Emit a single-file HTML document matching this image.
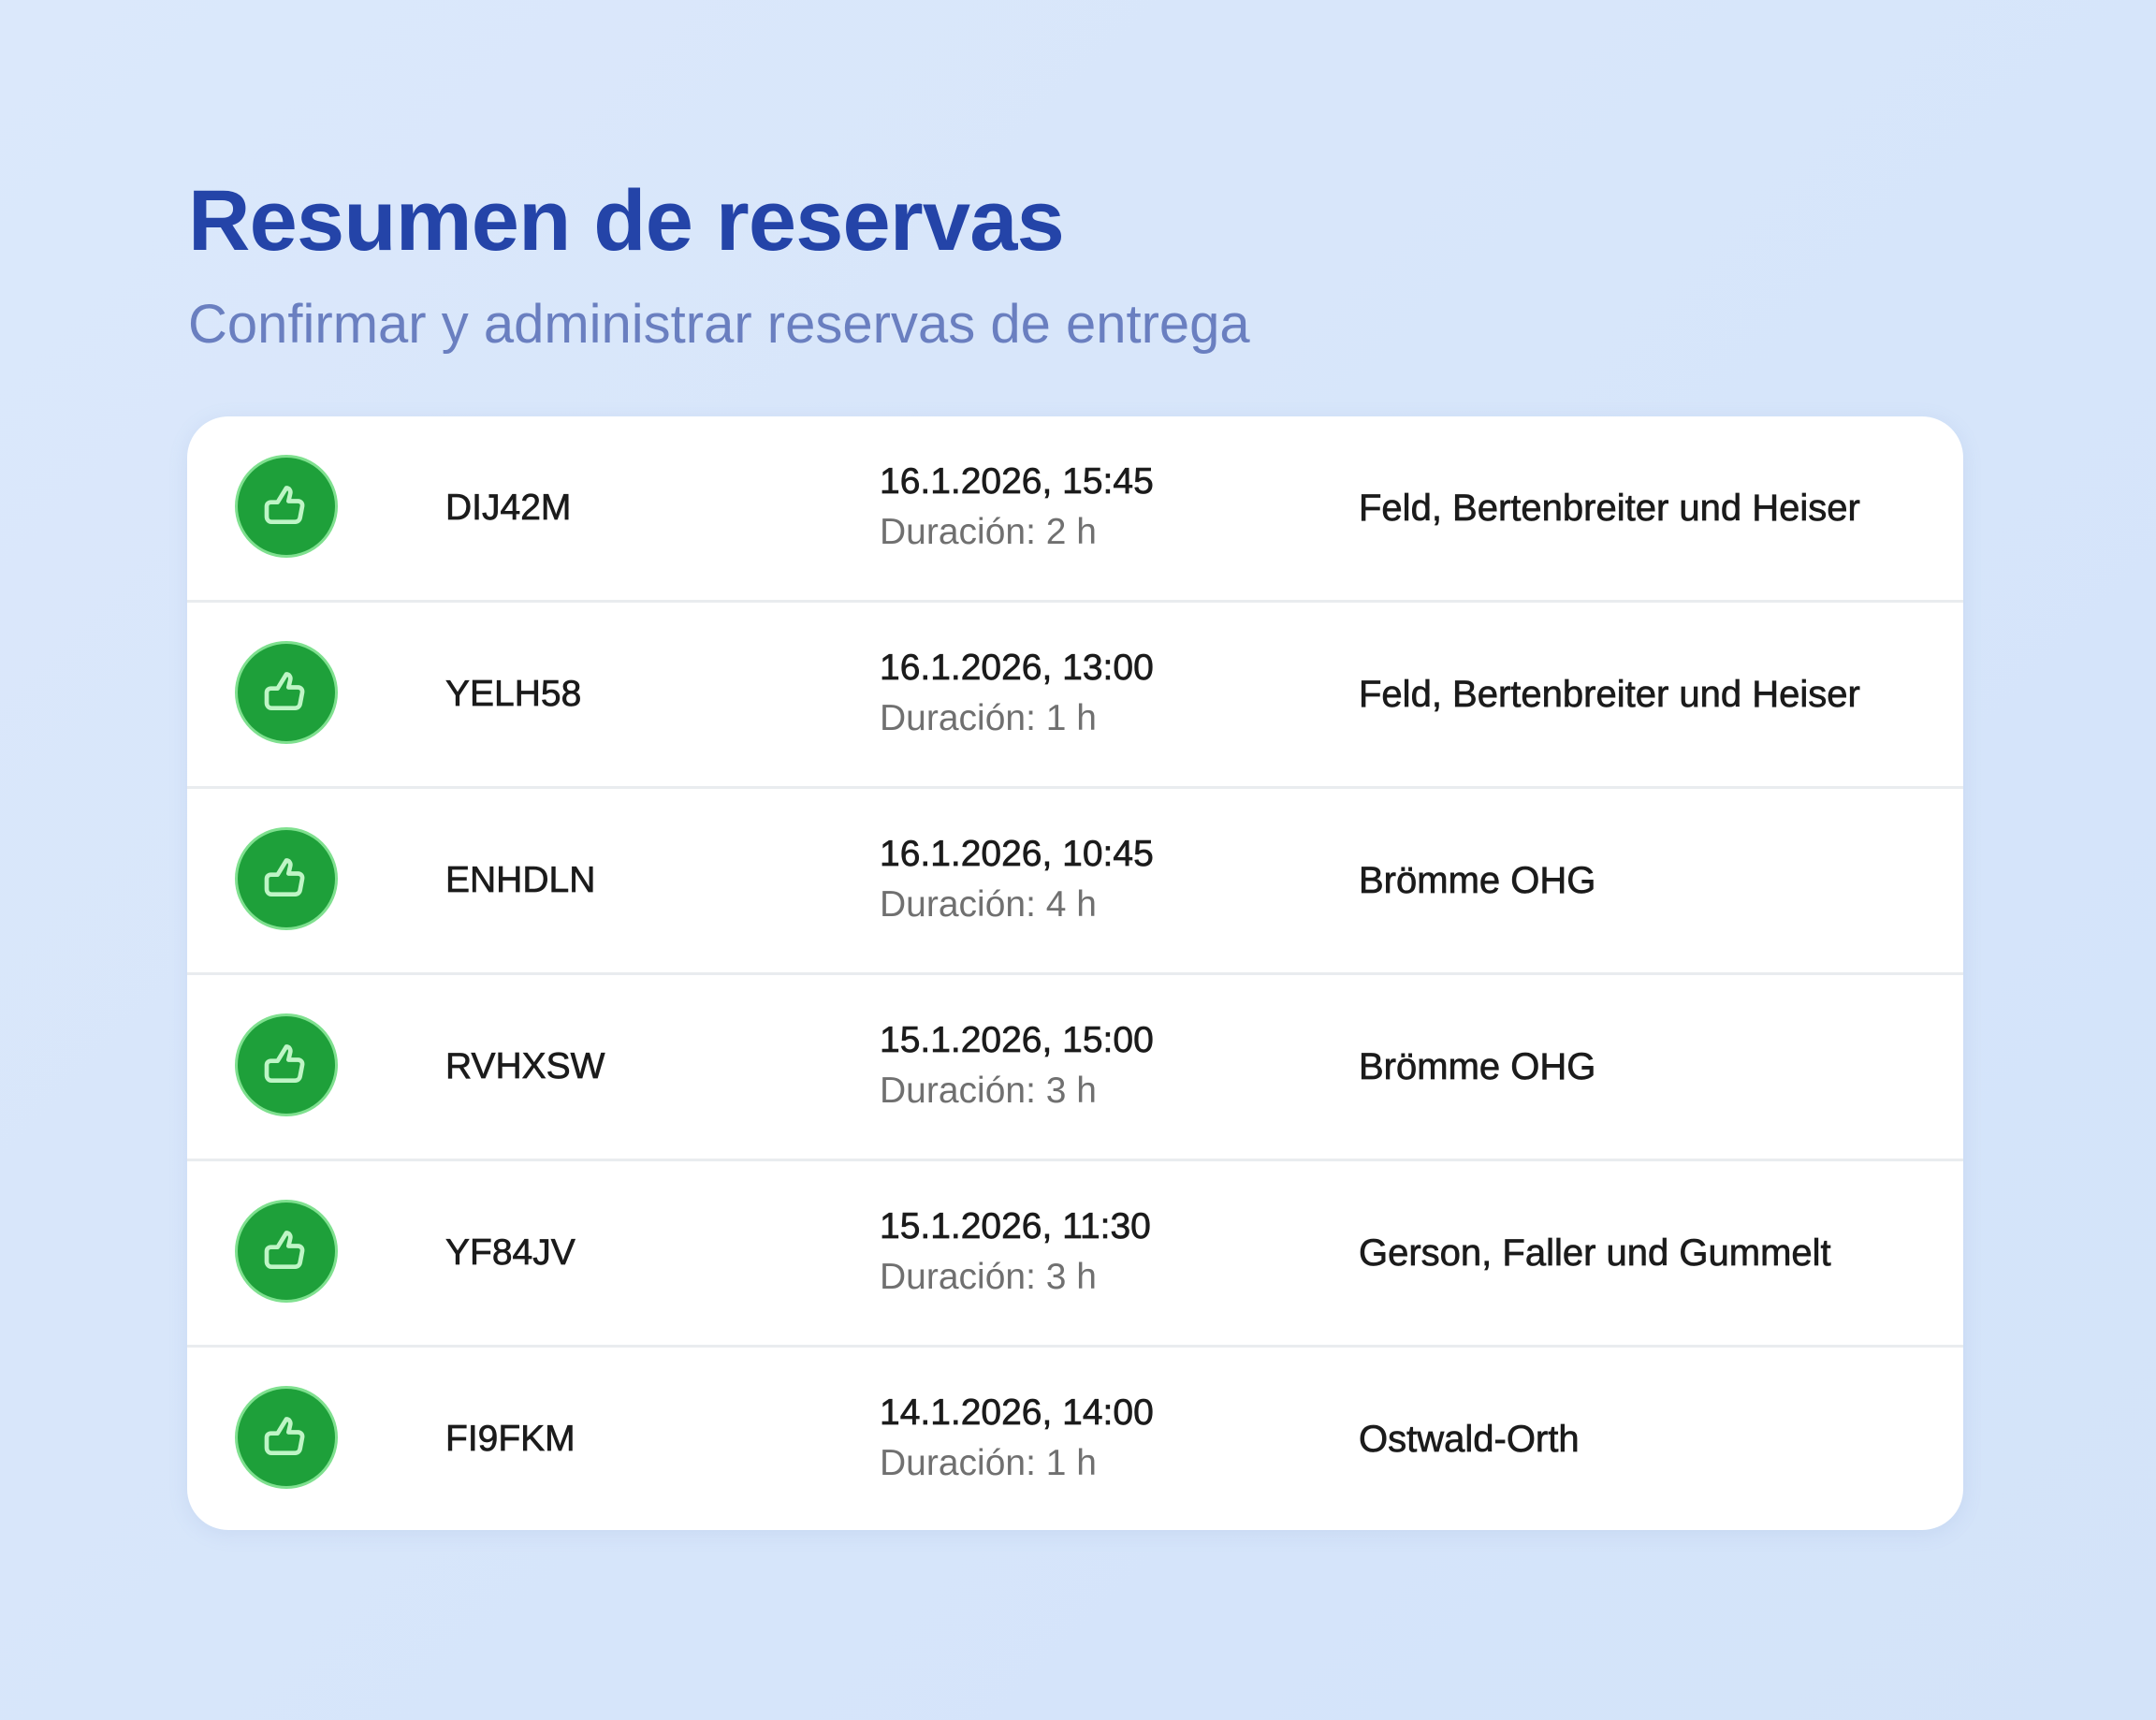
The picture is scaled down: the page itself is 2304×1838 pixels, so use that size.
<!DOCTYPE html>
<html><head><meta charset="utf-8"><style>
html,body{margin:0;padding:0}
body{width:2304px;height:1838px;background:linear-gradient(135deg,#dbe8fb 0%,#d6e5fa 60%,#d3e3f9 100%);font-family:"Liberation Sans",sans-serif;position:relative;overflow:hidden}
h1{position:absolute;left:201px;top:190px;margin:0;font-size:92px;font-weight:bold;color:#2444a8;letter-spacing:-0.8px;line-height:1}
.sub{position:absolute;left:201px;top:318px;font-size:58px;color:#6a7fc0;line-height:1}
.card{position:absolute;left:200px;top:445px;width:1898px;height:1190px;background:#fff;border-radius:44px;box-shadow:0 4px 20px rgba(120,150,200,.15);overflow:hidden}
.row{position:relative;height:196px;border-bottom:3px solid #e9ecef}
.ic{position:absolute;left:54px;top:44px;width:104px;height:104px;border-radius:50%;background:#1ea03a;box-shadow:0 0 0 3px #7fe08f}
.ic svg{position:absolute;left:24px;top:22px}
.code{position:absolute;left:276px;top:76px;font-size:39px;color:#1b1b1b;-webkit-text-stroke:.7px #1b1b1b}
.d1{position:absolute;left:740px;top:48px;font-size:39px;color:#1b1b1b;-webkit-text-stroke:.7px #1b1b1b}
.d2{position:absolute;left:740px;top:102px;font-size:39px;color:#707070}
.co{position:absolute;left:1252px;top:76px;font-size:40px;color:#1b1b1b;-webkit-text-stroke:.7px #1b1b1b}
</style></head><body>
<h1>Resumen de reservas</h1>
<div class="sub">Confirmar y administrar reservas de entrega</div>
<div class="card">
<div class="row"><div class="ic"><svg width="56" height="56" viewBox="0 0 24 24" fill="none" stroke="#bff5c6" stroke-width="2" stroke-linejoin="round" stroke-linecap="round"><path d="M5 11c-1.2 0-2 .8-2 2v4.5c0 1.3.8 2.5 2.2 2.5H16c1.2 0 2.1-.8 2.3-2l1-5.2c.2-1.3-.7-2.3-2-2.3H13l.8-3.5c.3-1.3-.5-2.5-1.8-2.5L8 11z"/></svg></div><div class="code">DIJ42M</div><div class="d1">16.1.2026, 15:45</div><div class="d2">Duración: 2 h</div><div class="co">Feld, Bertenbreiter und Heiser</div></div>
<div class="row"><div class="ic"><svg width="56" height="56" viewBox="0 0 24 24" fill="none" stroke="#bff5c6" stroke-width="2" stroke-linejoin="round" stroke-linecap="round"><path d="M5 11c-1.2 0-2 .8-2 2v4.5c0 1.3.8 2.5 2.2 2.5H16c1.2 0 2.1-.8 2.3-2l1-5.2c.2-1.3-.7-2.3-2-2.3H13l.8-3.5c.3-1.3-.5-2.5-1.8-2.5L8 11z"/></svg></div><div class="code">YELH58</div><div class="d1">16.1.2026, 13:00</div><div class="d2">Duración: 1 h</div><div class="co">Feld, Bertenbreiter und Heiser</div></div>
<div class="row"><div class="ic"><svg width="56" height="56" viewBox="0 0 24 24" fill="none" stroke="#bff5c6" stroke-width="2" stroke-linejoin="round" stroke-linecap="round"><path d="M5 11c-1.2 0-2 .8-2 2v4.5c0 1.3.8 2.5 2.2 2.5H16c1.2 0 2.1-.8 2.3-2l1-5.2c.2-1.3-.7-2.3-2-2.3H13l.8-3.5c.3-1.3-.5-2.5-1.8-2.5L8 11z"/></svg></div><div class="code">ENHDLN</div><div class="d1">16.1.2026, 10:45</div><div class="d2">Duración: 4 h</div><div class="co">Brömme OHG</div></div>
<div class="row"><div class="ic"><svg width="56" height="56" viewBox="0 0 24 24" fill="none" stroke="#bff5c6" stroke-width="2" stroke-linejoin="round" stroke-linecap="round"><path d="M5 11c-1.2 0-2 .8-2 2v4.5c0 1.3.8 2.5 2.2 2.5H16c1.2 0 2.1-.8 2.3-2l1-5.2c.2-1.3-.7-2.3-2-2.3H13l.8-3.5c.3-1.3-.5-2.5-1.8-2.5L8 11z"/></svg></div><div class="code">RVHXSW</div><div class="d1">15.1.2026, 15:00</div><div class="d2">Duración: 3 h</div><div class="co">Brömme OHG</div></div>
<div class="row"><div class="ic"><svg width="56" height="56" viewBox="0 0 24 24" fill="none" stroke="#bff5c6" stroke-width="2" stroke-linejoin="round" stroke-linecap="round"><path d="M5 11c-1.2 0-2 .8-2 2v4.5c0 1.3.8 2.5 2.2 2.5H16c1.2 0 2.1-.8 2.3-2l1-5.2c.2-1.3-.7-2.3-2-2.3H13l.8-3.5c.3-1.3-.5-2.5-1.8-2.5L8 11z"/></svg></div><div class="code">YF84JV</div><div class="d1">15.1.2026, 11:30</div><div class="d2">Duración: 3 h</div><div class="co">Gerson, Faller und Gummelt</div></div>
<div class="row"><div class="ic"><svg width="56" height="56" viewBox="0 0 24 24" fill="none" stroke="#bff5c6" stroke-width="2" stroke-linejoin="round" stroke-linecap="round"><path d="M5 11c-1.2 0-2 .8-2 2v4.5c0 1.3.8 2.5 2.2 2.5H16c1.2 0 2.1-.8 2.3-2l1-5.2c.2-1.3-.7-2.3-2-2.3H13l.8-3.5c.3-1.3-.5-2.5-1.8-2.5L8 11z"/></svg></div><div class="code">FI9FKM</div><div class="d1">14.1.2026, 14:00</div><div class="d2">Duración: 1 h</div><div class="co">Ostwald-Orth</div></div>
</div>
</body></html>
